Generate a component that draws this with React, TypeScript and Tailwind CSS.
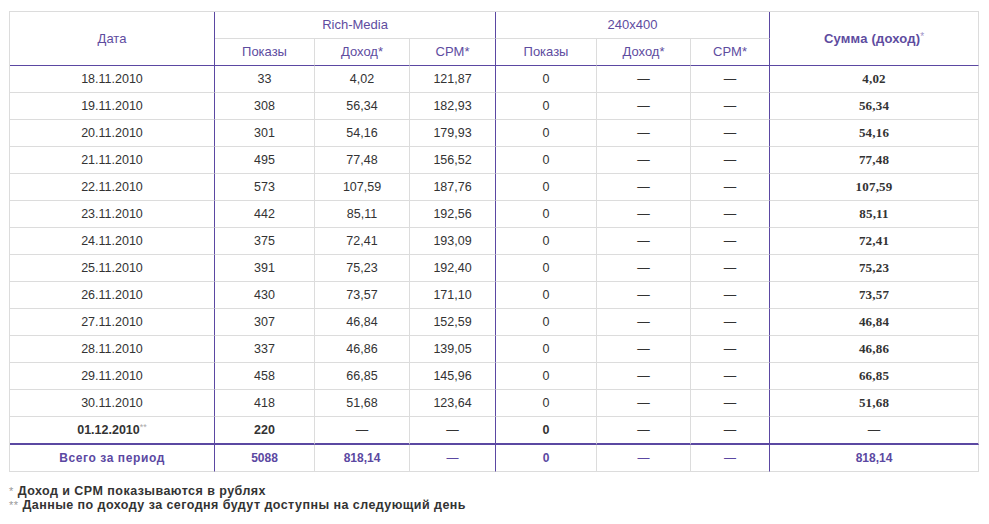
import React from "react";

type Row = { d: string; s: number; inc: string; cpm: string; sum: string };

const rows: Row[] = [
  { d: "18.11.2010", s: 33, inc: "4,02", cpm: "121,87", sum: "4,02" },
  { d: "19.11.2010", s: 308, inc: "56,34", cpm: "182,93", sum: "56,34" },
  { d: "20.11.2010", s: 301, inc: "54,16", cpm: "179,93", sum: "54,16" },
  { d: "21.11.2010", s: 495, inc: "77,48", cpm: "156,52", sum: "77,48" },
  { d: "22.11.2010", s: 573, inc: "107,59", cpm: "187,76", sum: "107,59" },
  { d: "23.11.2010", s: 442, inc: "85,11", cpm: "192,56", sum: "85,11" },
  { d: "24.11.2010", s: 375, inc: "72,41", cpm: "193,09", sum: "72,41" },
  { d: "25.11.2010", s: 391, inc: "75,23", cpm: "192,40", sum: "75,23" },
  { d: "26.11.2010", s: 430, inc: "73,57", cpm: "171,10", sum: "73,57" },
  { d: "27.11.2010", s: 307, inc: "46,84", cpm: "152,59", sum: "46,84" },
  { d: "28.11.2010", s: 337, inc: "46,86", cpm: "139,05", sum: "46,86" },
  { d: "29.11.2010", s: 458, inc: "66,85", cpm: "145,96", sum: "66,85" },
  { d: "30.11.2010", s: 418, inc: "51,68", cpm: "123,64", sum: "51,68" },
];

const cell = "border-r border-b border-[#dcdcdc] text-center align-middle p-0";
const purpleR = "border-r border-r-[#5b48a2]";

export default function App() {
  return (
    <div
      className="w-[989px] h-[524px] bg-white pl-[9px] pt-[11px] text-[#333333]"
      style={{ fontFamily: '"Liberation Sans", Arial, sans-serif' }}
    >
      <table className="border-separate border-spacing-0 border-t border-l border-[#dcdcdc] w-[969px] table-fixed">
        <colgroup>
          <col className="w-[205px]" />
          <col className="w-[100px]" />
          <col className="w-[95px]" />
          <col className="w-[86px]" />
          <col className="w-[101px]" />
          <col className="w-[94px]" />
          <col className="w-[79px]" />
          <col className="w-[209px]" />
        </colgroup>
        <thead>
          <tr className="h-[27px] text-[13px] text-[#5e4c9f]">
            <th rowSpan={2} className={`${cell} ${purpleR} font-normal border-b-[#5b48a2]`}>
              Дата
            </th>
            <th colSpan={3} className={`${cell} ${purpleR} font-normal`}>
              Rich-Media
            </th>
            <th colSpan={3} className={`${cell} ${purpleR} font-normal`}>
              240x400
            </th>
            <th rowSpan={2} className={`${cell} font-bold border-b-[#5b48a2]`}>
              <span className="text-[13px] tracking-[0.2px]">Сумма (доход)</span>
              <span className="text-[10px] font-normal align-top text-[#9e94c8]">*</span>
            </th>
          </tr>
          <tr className="h-[27px] text-[13px] text-[#5e4c9f]">
            <th className={`${cell} font-normal border-b-[#5b48a2]`}>Показы</th>
            <th className={`${cell} font-normal border-b-[#5b48a2]`}>Доход*</th>
            <th className={`${cell} ${purpleR} font-normal border-b-[#5b48a2]`}>CPM*</th>
            <th className={`${cell} font-normal border-b-[#5b48a2]`}>Показы</th>
            <th className={`${cell} font-normal border-b-[#5b48a2]`}>Доход*</th>
            <th className={`${cell} ${purpleR} font-normal border-b-[#5b48a2]`}>CPM*</th>
          </tr>
        </thead>
        <tbody className="text-[12.5px]">
          {rows.map((r) => (
            <tr key={r.d} className="h-[27px]">
              <td className={`${cell} ${purpleR}`}>{r.d}</td>
              <td className={cell}>{r.s}</td>
              <td className={cell}>{r.inc}</td>
              <td className={`${cell} ${purpleR}`}>{r.cpm}</td>
              <td className={cell}>0</td>
              <td className={cell}>—</td>
              <td className={`${cell} ${purpleR}`}>—</td>
              <td
                className={`${cell} font-bold text-[13px] tracking-[0.2px]`}
                style={{ fontFamily: '"Liberation Serif", "Times New Roman", serif' }}
              >
                {r.sum}
              </td>
            </tr>
          ))}
          <tr className="h-[28px] font-bold">
            <td className={`${cell} ${purpleR} border-b-2 border-b-[#5b48a2]`}>
              01.12.2010<span className="text-[9px] font-normal align-top text-[#aaaaaa]">**</span>
            </td>
            <td className={`${cell} border-b-2 border-b-[#5b48a2]`}>220</td>
            <td className={`${cell} border-b-2 border-b-[#5b48a2] font-normal`}>—</td>
            <td className={`${cell} ${purpleR} border-b-2 border-b-[#5b48a2] font-normal`}>—</td>
            <td className={`${cell} border-b-2 border-b-[#5b48a2]`}>0</td>
            <td className={`${cell} border-b-2 border-b-[#5b48a2] font-normal`}>—</td>
            <td className={`${cell} ${purpleR} border-b-2 border-b-[#5b48a2] font-normal`}>—</td>
            <td className={`${cell} border-b-2 border-b-[#5b48a2] font-normal`}>—</td>
          </tr>
          <tr className="h-[27px] font-bold text-[12px] text-[#5b48a2]">
            <td className={`${cell} ${purpleR} tracking-[0.6px]`}>Всего за период</td>
            <td className={cell}>5088</td>
            <td className={cell}>818,14</td>
            <td className={`${cell} ${purpleR} font-normal`}>—</td>
            <td className={cell}>0</td>
            <td className={`${cell} font-normal`}>—</td>
            <td className={`${cell} ${purpleR} font-normal`}>—</td>
            <td className={cell}>818,14</td>
          </tr>
        </tbody>
      </table>
      <div className="mt-[12px] text-[12.5px] leading-[14px] font-bold text-[#333333] tracking-[0.45px]">
        <div>
          <span className="text-[11px] font-normal text-[#999999] align-top">*</span> Доход и CPM показываются в рублях
        </div>
        <div>
          <span className="text-[11px] font-normal text-[#999999] align-top">**</span> Данные по доходу за сегодня будут доступны на следующий день
        </div>
      </div>
    </div>
  );
}
